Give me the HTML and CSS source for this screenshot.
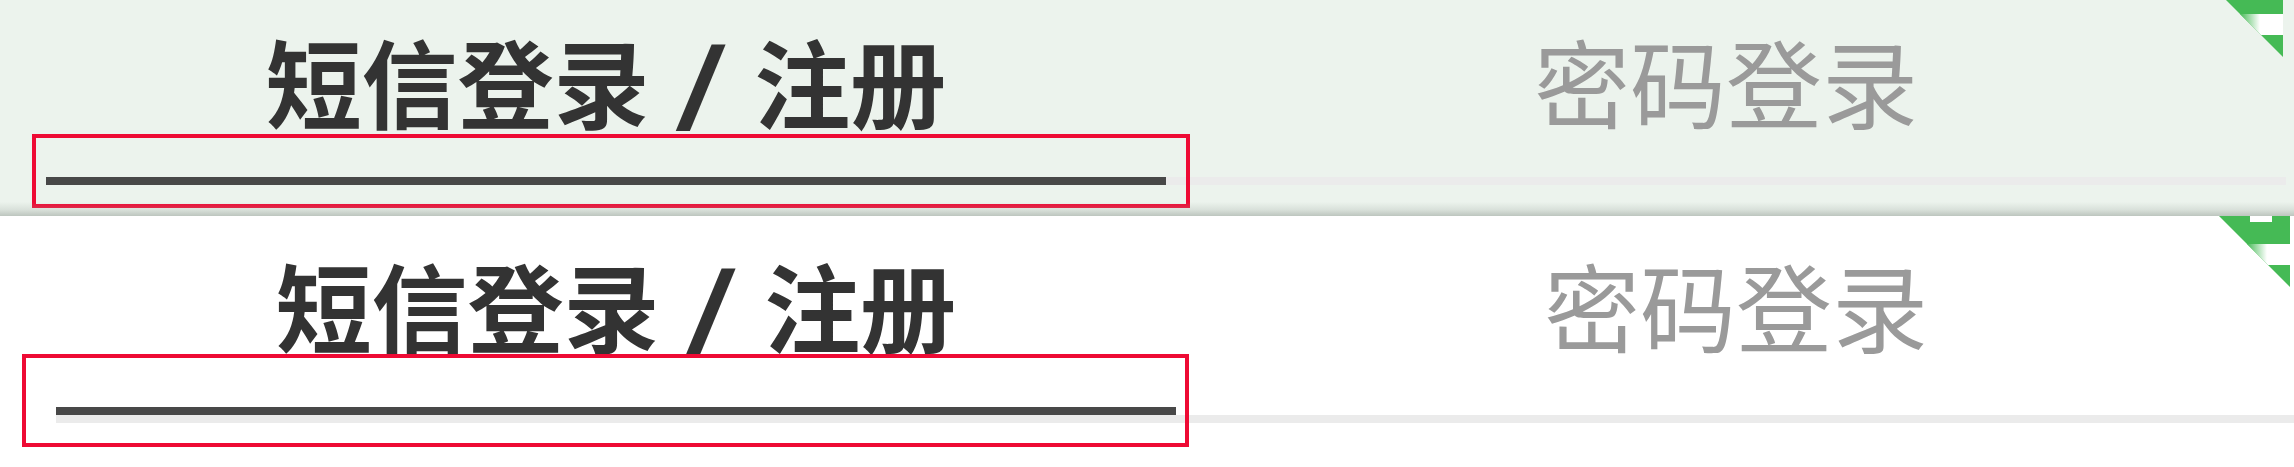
FILE: index.html
```html
<!DOCTYPE html>
<html lang="zh-CN">
<head>
<meta charset="utf-8">
<title>登录</title>
<link rel="stylesheet" href="styles.css">
</head>
<body>
<div class="page">
  <header class="sticky">
    <div class="tabs tabs--sticky">
      <div class="tab tab--active">
        <span class="tab-label">短信登录 <span class="slash">/</span> 注册</span>
        <span class="tab-bar"></span>
      </div>
      <div class="tab">
        <span class="tab-label">密码登录</span>
        <span class="tab-bar"></span>
      </div>
    </div>
    <svg class="corner corner--top" width="72" height="72" viewBox="0 0 72 72">
      <defs>
        <linearGradient id="bandA" x1="0" y1="0" x2="72" y2="0" gradientUnits="userSpaceOnUse">
          <stop offset="0.40" stop-color="#45ba55"/>
          <stop offset="0.68" stop-color="#ffffff"/>
        </linearGradient>
      </defs>
      <polygon points="0,0 72,0 72,72" fill="#45ba55"/>
      <polygon points="29,29 72,29 72,50 50,50" fill="url(#bandA)"/>
    </svg>
    <div class="mark mark--top"></div>
  </header>
  <main class="content">
    <div class="tabs tabs--content">
      <div class="tab tab--active">
        <span class="tab-label">短信登录 <span class="slash">/</span> 注册</span>
        <span class="tab-bar"></span>
      </div>
      <div class="tab">
        <span class="tab-label">密码登录</span>
        <span class="tab-bar"></span>
      </div>
    </div>
    <svg class="corner corner--content" width="72" height="72" viewBox="0 0 72 72">
      <defs>
        <linearGradient id="bandB" x1="0" y1="0" x2="72" y2="0" gradientUnits="userSpaceOnUse">
          <stop offset="0.40" stop-color="#45ba55"/>
          <stop offset="0.68" stop-color="#ffffff"/>
        </linearGradient>
      </defs>
      <polygon points="0,0 72,0 72,72" fill="#45ba55"/>
      <rect x="32" y="1" width="22" height="6" fill="#ffffff"/>
      <polygon points="29,29 72,29 72,50 50,50" fill="url(#bandB)"/>
    </svg>
    <div class="mark mark--content"></div>
  </main>
</div>
</body>
</html>
```
FILE: styles.css
```css
* { box-sizing: border-box; }
html, body { margin: 0; padding: 0; }
body {
  width: 2294px;
  height: 467px;
  overflow: hidden;
  background: #ffffff;
  font-family: "Noto Sans CJK SC", "Noto Sans", sans-serif;
}
.page {
  position: relative;
  width: 2294px;
  height: 467px;
  overflow: hidden;
}
.sticky {
  position: relative;
  z-index: 2;
  height: 216px;
  background: #ecf3ed;
  overflow: hidden;
}
.sticky::after {
  content: "";
  position: absolute;
  left: 0;
  right: 0;
  bottom: 0;
  height: 14px;
  background: linear-gradient(to bottom, rgba(160,170,162,0) 0%, rgba(160,170,162,0.25) 55%, rgba(150,160,152,0.55) 100%);
}
.content {
  position: relative;
  z-index: 1;
  height: 251px;
  background: #ffffff;
}
.tabs {
  display: grid;
  grid-template-columns: 1120px 1120px;
  width: 2240px;
}
.tabs--sticky {
  margin-left: 46px;
  padding-top: 32px;
}
.tabs--content {
  margin-left: 56px;
  padding-top: 40px;
  border-bottom: 8px solid #ebebeb;
  width: 2260px;
}
.tab {
  display: flex;
  flex-direction: column;
  align-items: center;
}
.tab-label {
  font-size: 96px;
  line-height: 96px;
  height: 96px;
  white-space: pre;
  color: #9a9a9a;
  font-weight: 400;
}
.tab--active .tab-label {
  color: #333333;
  font-weight: 700;
}
.slash {
  display: inline-block;
  margin: 0 12px;
  transform-origin: 50% 15px;
  transform: scale(1.5, 0.914);
}
.tab-bar {
  align-self: stretch;
  height: 8px;
}
.tabs--sticky .tab-bar {
  margin-top: 49px;
  background: #ebebeb;
}
.tabs--sticky .tab--active .tab-bar {
  background: #484848;
}
.tabs--content .tab-bar {
  margin-top: 55px;
  background: transparent;
}
.tabs--content .tab--active .tab-bar {
  background: #484848;
}
.corner {
  position: absolute;
  display: block;
}
.corner--top {
  left: 2211px;
  top: -15px;
}
.corner--content {
  left: 2218px;
  top: -1px;
}
.mark {
  position: absolute;
  border: 4px solid #ee0a34;
  pointer-events: none;
}
.mark--top {
  left: 32px;
  top: 134px;
  width: 1158px;
  height: 74px;
}
.mark--content {
  left: 22px;
  top: 138px;
  width: 1167px;
  height: 93px;
  z-index: 3;
}
```
